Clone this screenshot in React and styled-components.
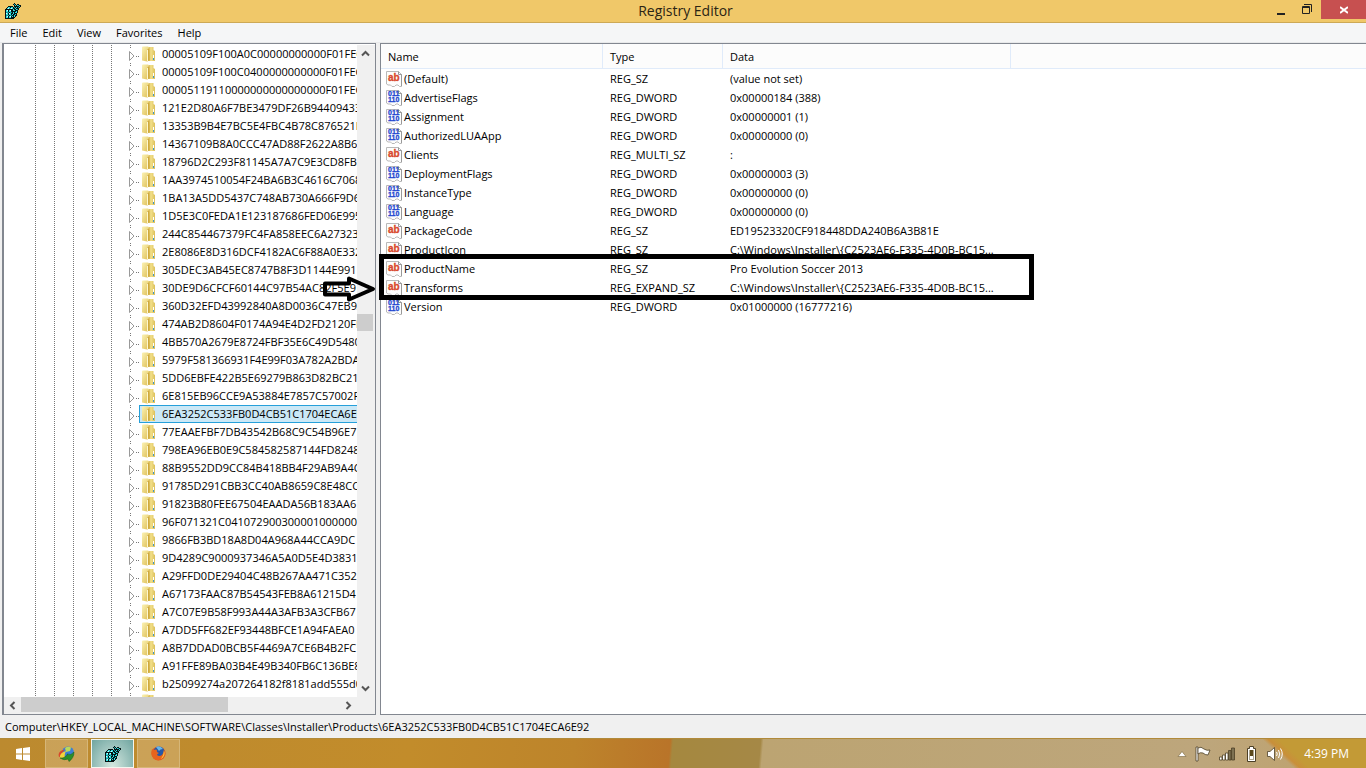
import styled, { createGlobalStyle } from "styled-components";

const keys = [
    "00005109F100A0C00000000000F01FEC",
    "00005109F100C0400000000000F01FEC",
    "00005119110000000000000000F01FEC",
    "121E2D80A6F7BE3479DF26B944094330",
    "13353B9B4E7BC5E4FBC4B78C876521D",
    "14367109B8A0CCC47AD88F2622A8B6",
    "18796D2C293F81145A7A7C9E3CD8FB",
    "1AA3974510054F24BA6B3C4616C7068",
    "1BA13A5DD5437C748AB730A666F9D6",
    "1D5E3C0FEDA1E123187686FED06E995",
    "244C854467379FC4FA858EEC6A27323",
    "2E8086E8D316DCF4182AC6F88A0E332",
    "305DEC3AB45EC8747B8F3D1144E9911",
    "30DE9D6CFCF60144C97B54AC82F5E9",
    "360D32EFD43992840A8D0036C47EB9A",
    "474AB2D8604F0174A94E4D2FD2120FD",
    "4BB570A2679E8724FBF35E6C49D5480",
    "5979F581366931F4E99F03A782A2BDA",
    "5DD6EBFE422B5E69279B863D82BC216",
    "6E815EB96CCE9A53884E7857C57002F",
    "6EA3252C533FB0D4CB51C1704ECA6E92",
    "77EAAEFBF7DB43542B68C9C54B96E7",
    "798EA96EB0E9C584582587144FD8248B",
    "88B9552DD9CC84B418BB4F29AB9A4C",
    "91785D291CBB3CC40AB8659C8E48CC",
    "91823B80FEE67504EAADA56B183AA6",
    "96F071321C0410729003000010000000",
    "9866FB3BD18A8D04A968A44CCA9DC",
    "9D4289C9000937346A5A0D5E4D38314",
    "A29FFD0DE29404C48B267AA471C352",
    "A67173FAAC87B54543FEB8A61215D4",
    "A7C07E9B58F993A44A3AFB3A3CFB67",
    "A7DD5FF682EF93448BFCE1A94FAEA0",
    "A8B7DDAD0BCB5F4469A7CE6B4B2FC",
    "A91FFE89BA03B4E49B340FB6C136BE8",
    "b25099274a207264182f8181add555d0",
    "",
];

const selectedKey = "6EA3252C533FB0D4CB51C1704ECA6E92";

const values = [
    ["(Default)", "REG_SZ", "(value not set)"],
    ["AdvertiseFlags", "REG_DWORD", "0x00000184 (388)"],
    ["Assignment", "REG_DWORD", "0x00000001 (1)"],
    ["AuthorizedLUAApp", "REG_DWORD", "0x00000000 (0)"],
    ["Clients", "REG_MULTI_SZ", ":"],
    ["DeploymentFlags", "REG_DWORD", "0x00000003 (3)"],
    ["InstanceType", "REG_DWORD", "0x00000000 (0)"],
    ["Language", "REG_DWORD", "0x00000000 (0)"],
    ["PackageCode", "REG_SZ", "ED19523320CF918448DDA240B6A3B81E"],
    ["ProductIcon", "REG_SZ", "C:\\Windows\\Installer\\{C2523AE6-F335-4D0B-BC15..."],
    ["ProductName", "REG_SZ", "Pro Evolution Soccer 2013"],
    ["Transforms", "REG_EXPAND_SZ", "C:\\Windows\\Installer\\{C2523AE6-F335-4D0B-BC15..."],
    ["Version", "REG_DWORD", "0x01000000 (16777216)"],
];

// k = black, t = teal, c = cyan, w = white
const regeditPixels = [
    ".........k......",
    "........ktk.kk..",
    ".........kckctkk",
    "...kkkkk.kkkkkck",
    "..kcckccktkcktk.",
    ".kcwtcwckkckkk..",
    "kkkkkkkkckkctk..",
    "kcwkcwkkcckkk...",
    "kcckcckkkkkck...",
    "ktttkttkckcck...",
    "kwckwckkckkk....",
    "kcckcckckkck....",
    "ktttkttkkckk....",
    "kcwkcwkckck.....",
    "kcckcckkkk......",
    "kkkkkkkkk.......",
];
const pixelColors = { k: "#031414", t: "#179a9c", c: "#2fdfe2", w: "#d4ffff" };

function RegeditIcon({ size }) {
    return (
        <svg width={size} height={size} viewBox="0 0 16 16" shapeRendering="crispEdges" aria-hidden="true">
            {regeditPixels.map((line, y) =>
                line.split("").map((p, x) =>
                    p === "." ? null : <rect key={x + "-" + y} x={x} y={y} width="1" height="1" fill={pixelColors[p]} />
                )
            )}
        </svg>
    )
}

function FolderIcon() {
    return (
        <svg width="14" height="16" viewBox="0 0 14 16" aria-hidden="true">
            <defs>
                <linearGradient id="folderLeft" x1="0" x2="1" y1="0" y2="1">
                    <stop offset="0" stopColor="#fbf2b4" />
                    <stop offset="1" stopColor="#dcbb4f" />
                </linearGradient>
                <linearGradient id="folderRight" x1="0" x2="1">
                    <stop offset="0" stopColor="#b8932f" />
                    <stop offset=".4" stopColor="#f3e18a" />
                    <stop offset="1" stopColor="#dcc05a" />
                </linearGradient>
            </defs>
            <path d="M6 1H11.5V4L13 5V15H6Z" fill="url(#folderRight)" />
            <rect x="11" y="9" width="1" height="4" fill="#fff" />
            <rect x="11" y="12" width="1" height="2" fill="#3f97c8" />
            <path d="M0 1.5Q0 .5 1 .5H6L8 2V14L5 15.5L0 14.5Z" fill="url(#folderLeft)" />
            <path d="M5 3.5L7.5 2V14L5 15.5Z" fill="#cfa93d" />
            <path d="M5 4L6 3.5V15L5 15.5Z" fill="#fdf8cf" />
        </svg>
    )
}

function ValueIcon({ text }) {
    return (
        <svg width="16" height="16" viewBox="0 0 16 16" aria-hidden="true">
            <path d="M.5 .5H12.5L15.5 3.5V15.5H13.5L12 14H10L8.5 15.5H6L4.5 14H2L.5 13Z" fill="#fdfdfd" stroke="#b9b9b9" />
            <path d="M12.5 .5V3.5H15.5V15" fill="none" stroke="#999" />
            {text ? (
                <IconText x="2" y="10" fill="#d8472b" stroke="#d8472b" fontSize="10">ab</IconText>
            ) : (
                <>
                    <IconText x="2" y="6" fill="#2448d0" stroke="#2448d0" fontSize="7">011</IconText>
                    <IconText x="2" y="12" fill="#2448d0" stroke="#2448d0" fontSize="7">110</IconText>
                </>
            )}
        </svg>
    )
}

function Chevron({ d }) {
    return (
        <svg width="9" height="9" viewBox="0 0 9 9" aria-hidden="true">
            <path d={d} fill="none" stroke="#555" strokeWidth="2" />
        </svg>
    )
}

function WindowsIcon() {
    return (
        <svg width="14" height="14" viewBox="0 0 14 14" aria-hidden="true">
            <path d="M0 2L6 1V6.5H0ZM7 .9L14 0V6.5H7ZM0 7.5H6V13L0 12ZM7 7.5H14V14L7 13Z" fill="#fff" />
        </svg>
    )
}

function DownloadManagerIcon() {
    return (
        <svg width="17" height="16" viewBox="0 0 17 16" aria-hidden="true">
            <circle cx="10" cy="6.5" r="6" fill="#3d7fd6" />
            <path d="M7 2Q10 0 13 1.5L12 5L8 6Z" fill="#b9d95a" />
            <path d="M1 11Q-1 5 7 3.5Q3 7 5 10Z" fill="#d9482c" />
            <path d="M2 12Q1 7 8 5Q6 9 7 11Z" fill="#f2d43b" />
            <path d="M2 12Q5 13 8 10Q10 9 9 8Q13 10 16 6Q16 12 11 15.5L10 13Q6 15 2 12Z" fill="#2c8f28" stroke="#135f16" strokeWidth=".5" />
        </svg>
    )
}

function FirefoxIcon() {
    return (
        <svg width="15" height="15" viewBox="0 0 15 15" aria-hidden="true">
            <circle cx="7.5" cy="7.5" r="7" fill="#e4571b" />
            <circle cx="8" cy="6" r="5.5" fill="#2558a8" />
            <path d="M5 1Q9 -1 12 3Q9 3 8 5Z" fill="#65b5e8" />
            <path d="M1 3L3 4Q5 3 6 4Q5 6 8 7Q6 8 6 9Q8 11 11 9Q13 7 12.5 4Q16 7 13 11Q9 16 4 13.5Q-1 10 1 3Z" fill="#e8641e" />
            <path d="M13 4.5Q15 10 10 13Q13 9 13 4.5Z" fill="#ffcf3f" />
        </svg>
    )
}

function App() {
    return (
        <>
            <GlobalStyle />
            <Screen>
                <TitleBar>
                    <RegeditIcon size={16} />
                    <h1>Registry Editor</h1>
                    <Caption>
                        <CaptionButton aria-label="Minimize">
                            <svg width="8" height="10" viewBox="0 0 8 10"><path d="M0 9H8" stroke="#222" strokeWidth="2" /></svg>
                        </CaptionButton>
                        <CaptionButton aria-label="Restore">
                            <svg width="11" height="11" viewBox="0 0 11 11" fill="none" stroke="#222">
                                <path d="M.5 2.5H7.5V9.5H.5ZM0 3.5H8M2 .5H9.5V8" />
                            </svg>
                        </CaptionButton>
                        <CaptionButton aria-label="Close" $close>
                            <svg width="8" height="8" viewBox="0 0 8 8"><path d="M0 1L8 7M8 1L0 7" stroke="#fff" strokeWidth="2" /></svg>
                        </CaptionButton>
                    </Caption>
                </TitleBar>
                <MenuBar>
                    {["File", "Edit", "View", "Favorites", "Help"].map((m) => (
                        <button key={m}>{m}</button>
                    ))}
                </MenuBar>
                <Panes>
                    <TreePane>
                        <TreeView>
                            <Tree>
                                {keys.map((name, i) => (
                                    <TreeRow key={i}>
                                        <Guide $first />
                                        <Guide />
                                        <Guide />
                                        <Guide />
                                        <Guide />
                                        <Expander aria-label={"Expand " + name}>
                                            <svg width="10" height="18" viewBox="0 0 10 18">
                                                <path d="M1.5 0V1M1.5 2V3M7 11.5H8M9 11.5H10" stroke="#777" />
                                                <path d="M.5 6.5L5 11L.5 15.5Z" fill="#fff" stroke="#999" />
                                            </svg>
                                        </Expander>
                                        <KeyLabel $selected={name === selectedKey}>
                                            <FolderIcon />
                                            <span>{name}</span>
                                        </KeyLabel>
                                    </TreeRow>
                                ))}
                            </Tree>
                            <VerticalBar>
                                <ScrollButton aria-label="Scroll up"><Chevron d="M1 6.5L4.5 3L8 6.5" /></ScrollButton>
                                <Track $before={252} $after={348}>
                                    <Thumb />
                                </Track>
                                <ScrollButton aria-label="Scroll down"><Chevron d="M1 2.5L4.5 6L8 2.5" /></ScrollButton>
                            </VerticalBar>
                        </TreeView>
                        <HorizontalBar>
                            <ScrollButton aria-label="Scroll left"><Chevron d="M6.5 1L3 4.5L6.5 8" /></ScrollButton>
                            <WideTrack>
                                <Thumb />
                            </WideTrack>
                            <ScrollButton aria-label="Scroll right"><Chevron d="M2.5 1L6 4.5L2.5 8" /></ScrollButton>
                        </HorizontalBar>
                        <ArrowMark width="56" height="28" viewBox="0 0 56 28" aria-hidden="true">
                            <path d="M4 8.5H28V3.5L52 14L28 24.5V19.5H4Z" fill="none" stroke="#000" strokeWidth="4" strokeLinejoin="round" />
                        </ArrowMark>
                    </TreePane>
                    <ListPane>
                        <ValueTable>
                            <thead>
                                <tr>
                                    <HeadCell $width={222}>Name</HeadCell>
                                    <HeadCell $width={120}>Type</HeadCell>
                                    <HeadCell $width={288}>Data</HeadCell>
                                    <HeadCell as="td" />
                                </tr>
                            </thead>
                            <tbody>
                                {values.map(([name, type, data]) => (
                                    <tr key={name}>
                                        <NameCell>
                                            <div>
                                                <ValueIcon text={type !== "REG_DWORD"} />
                                                {name}
                                            </div>
                                        </NameCell>
                                        <Cell>{type}</Cell>
                                        <Cell>{data}</Cell>
                                        <td />
                                    </tr>
                                ))}
                            </tbody>
                        </ValueTable>
                        <BoxMark />
                    </ListPane>
                </Panes>
                <StatusBar>Computer\HKEY_LOCAL_MACHINE\SOFTWARE\Classes\Installer\Products\6EA3252C533FB0D4CB51C1704ECA6E92</StatusBar>
                <TaskBar>
                    <StartButton aria-label="Start"><WindowsIcon /></StartButton>
                    <TaskButton aria-label="Download Manager"><DownloadManagerIcon /></TaskButton>
                    <TaskButton aria-label="Registry Editor" $active><RegeditIcon size={16} /></TaskButton>
                    <TaskButton aria-label="Firefox"><FirefoxIcon /></TaskButton>
                    <Tray>
                        <svg width="10" height="6" viewBox="0 0 10 6" aria-hidden="true"><path d="M5 .5L9 5.5H1Z" fill="#fff" stroke="#77653c" strokeWidth=".6" /></svg>
                        <svg width="16" height="16" viewBox="0 0 16 16" aria-hidden="true">
                            <path d="M1 1H3V15H1Z" fill="#fff" stroke="#4c4026" strokeWidth=".8" />
                            <path d="M3 2Q6 0 9 3Q12 5 15 4L13 9Q10 9 8 7Q5 6 3 8Z" fill="#fff" stroke="#4c4026" strokeWidth=".8" />
                        </svg>
                        <svg width="16" height="14" viewBox="0 0 16 14" aria-hidden="true" stroke="#4c4026" strokeWidth=".8">
                            <path d="M.5 10H3V13H.5ZM3.5 8H6V13H3.5ZM6.5 6H9V13H6.5Z" fill="#fff" />
                            <path d="M9.5 3.5H12V13H9.5ZM12.5 1H15.5V13H12.5Z" fill="#7d7152" />
                        </svg>
                        <svg width="16" height="16" viewBox="0 0 16 16" aria-hidden="true">
                            <path d="M6.5 .5H10.5V2.5H12.5V15.5H4.5V2.5H6.5Z" fill="#fff" stroke="#4c4026" />
                            <path d="M6.5 4H10.5V14H6.5Z" fill="#5a481c" />
                            <path d="M7 10H10V13.5H7Z" fill="#fff" />
                        </svg>
                        <svg width="17" height="14" viewBox="0 0 17 14" aria-hidden="true" fill="none">
                            <path d="M.5 4.5H3L7.5 .5V13.5L3 9.5H.5Z" fill="#fff" stroke="#4c4026" strokeWidth=".8" />
                            <path d="M9.5 5Q11 7 9.5 9M11.5 3Q14 7 11.5 11M13.5 1.5Q17 7 13.5 12.5" stroke="#fff" />
                        </svg>
                        <time>4:39 PM</time>
                    </Tray>
                </TaskBar>
            </Screen>
        </>
    )
}

const GlobalStyle = createGlobalStyle`
    * {
        box-sizing: border-box;
    }

    body {
        margin: 0;
        color: #000;
        font-family: "Open Sans", "Noto Sans", sans-serif;
        font-size: 11px;
        line-height: 18px;
    }

    button {
        border: none;
        padding: 0;
        background: none;
        font: inherit;
        color: inherit;
    }

    svg {
        flex: none;
        display: block;
    }
`

const Screen = styled.div`
    display: flex;
    flex-direction: column;
    height: 100vh;
    background: #f0f0f0;
    overflow: hidden;
`

const TitleBar = styled.header`
    display: grid;
    grid-template-columns: 1fr auto 1fr;
    align-items: center;
    height: 23px;
    padding-left: 5px;
    background: #f0c869;
    border-bottom: 1px solid #cda956;

    h1 {
        margin: 0;
        font-size: 14px;
        font-weight: 400;
        color: #2b2414;
    }
`

const Caption = styled.div`
    display: flex;
    justify-content: flex-end;
    align-self: start;
`

const CaptionButton = styled.button`
    display: flex;
    align-items: center;
    justify-content: center;
    width: ${(p) => (p.$close ? 45 : 27)}px;
    height: 19px;
    background: ${(p) => (p.$close ? "#c75050" : "none")};
`

const MenuBar = styled.nav`
    display: flex;
    gap: 15px;
    height: 20px;
    padding-left: 10px;
    background: #f5f6f7;
    border-bottom: 1px solid #e8e9ea;
`

const Panes = styled.main`
    flex: 1;
    display: flex;
    gap: 4px;
    min-height: 0;
    padding-left: 2px;
`

const TreePane = styled.section`
    position: relative;
    display: flex;
    flex-direction: column;
    width: 374px;
    padding-top: 1px;
    border: 1px solid #828790;
    border-left-width: 2px;
    background: #fff;
`

const TreeView = styled.div`
    flex: 1;
    display: flex;
    min-height: 0;
`

const Tree = styled.ul`
    flex: 1;
    margin: 0;
    padding: 0;
    overflow: hidden;
    list-style: none;
    white-space: nowrap;
`

const TreeRow = styled.li`
    display: flex;
    height: 18px;
`

const Guide = styled.span`
    flex: none;
    width: ${(p) => (p.$first ? 32 : 19)}px;
    background: repeating-linear-gradient(#777 0 1px, #fff 1px 2px) right / 1px 100% no-repeat;
`

const Expander = styled.button`
    flex: none;
    width: 27px;
    padding-left: 17px;
`

const KeyLabel = styled.div`
    flex: 1;
    display: flex;
    align-items: center;
    gap: 6px;
    padding-left: 2px;
    border: 1px solid ${(p) => (p.$selected ? "#26a0da" : "transparent")};
    border-right: none;
    background: ${(p) => (p.$selected ? "#cbe8f6" : "none")};
`

const VerticalBar = styled.div`
    display: flex;
    flex-direction: column;
    width: 18px;
    background: #f0f0f0;
`

const HorizontalBar = styled.div`
    display: flex;
    height: 17px;
    padding-right: 18px;
    background: #f0f0f0;
`

const ScrollButton = styled.button`
    flex: none;
    display: flex;
    align-items: center;
    justify-content: center;
    width: 17px;
    height: 17px;
`

const Track = styled.div`
    flex: 1;
    display: grid;
    grid-template-rows: ${(p) => p.$before}fr 17px ${(p) => p.$after}fr;

    div {
        grid-row: 2;
        margin-right: 2px;
    }
`

const WideTrack = styled.div`
    flex: 1;
    display: grid;
    grid-template-columns: 65% 1fr;
    padding-bottom: 2px;
`

const Thumb = styled.div`
    background: #cdcdcd;
`

const ArrowMark = styled.svg`
    position: absolute;
    right: -2px;
    top: 231px;
`

const ListPane = styled.section`
    position: relative;
    flex: 1;
    border: 1px solid #828790;
    border-right: none;
    background: #fff;
`

const ValueTable = styled.table`
    width: 100%;
    table-layout: fixed;
    border-collapse: separate;
    border-spacing: 0;
    white-space: nowrap;
`

const HeadCell = styled.th`
    width: ${(p) => (p.$width ? p.$width + "px" : "auto")};
    height: 25px;
    padding: 2px 7px 0;
    border-bottom: 1px solid #e0ebfa;
    border-right: ${(p) => (p.$width ? "1px solid #e0ebfa" : "none")};
    background: #fcfcfc;
    font-weight: 400;
    text-align: left;
`

const Cell = styled.td`
    height: 19px;
    padding: 0 0 0 7px;
`

const NameCell = styled(Cell)`
    padding-left: 5px;

    div {
        display: flex;
        align-items: center;
        gap: 2px;
    }
`

const IconText = styled.text`
    font-family: "Liberation Sans", sans-serif;
    font-weight: 700;
    stroke-width: 0.3px;
`

const BoxMark = styled.div`
    position: absolute;
    left: -2px;
    top: 210px;
    width: 655px;
    height: 46px;
    border: 5px solid #000;
`

const StatusBar = styled.footer`
    height: 23px;
    padding: 3px 5px;
`

const TaskBar = styled.footer`
    display: flex;
    height: 30px;
    background:
        linear-gradient(42deg, transparent 48%, #c98f3a 51%, #c39a36 56%) right / 168px 100% no-repeat,
        linear-gradient(95deg, #bc8a2f 0%, #c28c2b 30%, #bd842b 42%, #b97429 49%, #a5883f 49.2%, #a58846 55.6%, #bca472 55.8%, #bda67c 88%, #bfa169 100%);
    border-top: 1px solid #b18a3a;
`

const StartButton = styled.button`
    display: flex;
    align-items: center;
    justify-content: center;
    width: 45px;
`

const TaskButton = styled.button`
    display: flex;
    align-items: center;
    justify-content: center;
    width: 43px;
    margin-right: 3px;
    border: 1px solid ${(p) => (p.$active ? "#f4f6ef" : "#d6b678")};
    background: ${(p) => (p.$active ? "radial-gradient(at bottom, #d5e8e0, #6fa5a0)" : "rgba(255, 255, 255, 0.2)")};
`

const Tray = styled.div`
    display: flex;
    align-items: center;
    gap: 8px;
    margin-left: auto;
    padding-right: 17px;
    color: #fff;

    time {
        margin-left: 12px;
        font-size: 12px;
    }
`

export default App;
